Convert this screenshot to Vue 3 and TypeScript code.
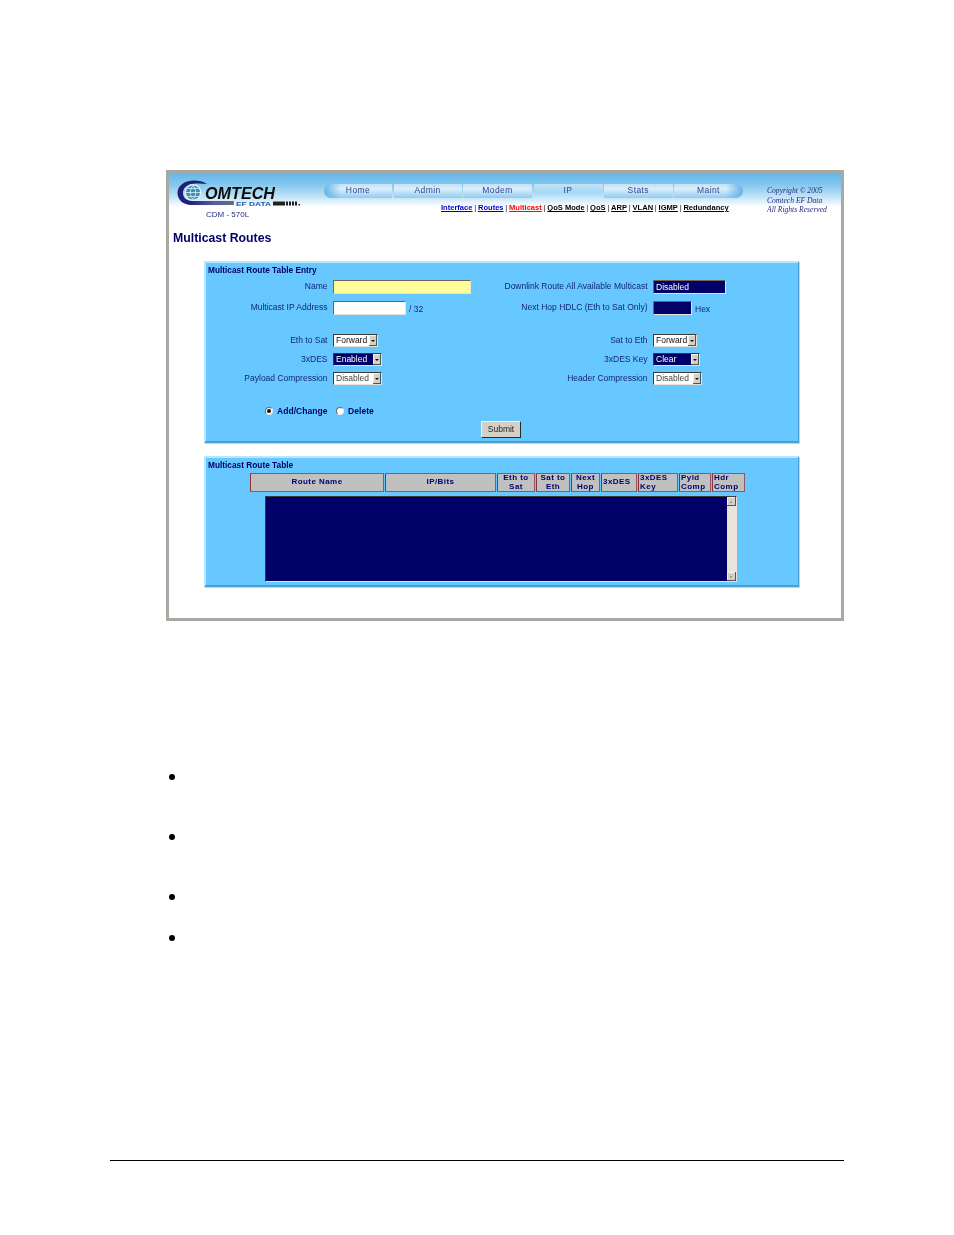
<script setup lang="ts">
const tabs = ['Home', 'Admin', 'Modem', 'IP', 'Stats', 'Maint']
const links = [
  { t: 'Interface', c: 'blue' },
  { t: 'Routes', c: 'blue' },
  { t: 'Multicast', c: 'red' },
  { t: 'QoS Mode', c: 'black' },
  { t: 'QoS', c: 'black' },
  { t: 'ARP', c: 'black' },
  { t: 'VLAN', c: 'black' },
  { t: 'IGMP', c: 'black' },
  { t: 'Redundancy', c: 'black' },
]
const heads = [
  { t: 'Route Name', a: 'c' },
  { t: 'IP/Bits', a: 'c' },
  { t: 'Eth to Sat', a: 'c' },
  { t: 'Sat to Eth', a: 'c' },
  { t: 'Next Hop', a: 'c' },
  { t: '3xDES', a: 'l' },
  { t: '3xDES Key', a: 'l' },
  { t: 'Pyld Comp', a: 'l' },
  { t: 'Hdr Comp', a: 'l' },
]
const bullets = ['tall', 'tall', 'short', 'last']
</script>

<template>
  <div class="page">
    <div class="frame">
      <header class="head">
        <div class="brand">
          <svg class="logo" width="126" height="30" viewBox="0 0 126 30">
            <defs>
              <linearGradient id="band" x1="0" x2="1" y1="0" y2="0">
                <stop offset="0" stop-color="#26267c" />
                <stop offset="0.55" stop-color="#5a5aa0" />
                <stop offset="1" stop-color="#6a6a78" />
              </linearGradient>
            </defs>
            <path d="M31 6C27 3 23 2.500 18 2.500 8 2.500 1.500 8 1.500 15c0 7 6 12 14 12l42 0 0-4-40 0C11 23 7 20 7 15 7 10 11 6.500 17 5.800c5-.5 9-.3 14 .2z" fill="#1f1f78" />
            <rect x="15" y="23" width="42.500" height="4" fill="url(#band)" />
            <circle cx="17" cy="14.500" r="8.500" fill="#d8eef8" />
            <circle cx="17" cy="14.500" r="7" fill="#3d8fb4" />
            <path d="M10 14.500h14M17 7.500c-3.500 4-3.500 10 0 14M17 7.500c3.500 4 3.500 10 0 14M11.500 10.500h11M11.500 18.500h11" stroke="#e4f3f9" stroke-width="0.800" fill="none" />
            <text x="29" y="20.500" class="omtech" textLength="70" lengthAdjust="spacingAndGlyphs">OMTECH</text>
            <text x="60" y="27.500" class="efdata" textLength="35" lengthAdjust="spacingAndGlyphs">EF DATA</text>
            <path d="M97 23.500h12v4H97zM110 23.500h2v4h-2zM113 23.500h2v4h-2zM116 23.500h2v4h-2zM119 23.500h2v4h-2z" fill="#222" />
            <rect x="122.500" y="26" width="1.500" height="1.500" fill="#222" />
          </svg>
          <div class="model">CDM - 570L</div>
        </div>
        <nav class="nav">
          <div class="tabs">
            <div
              v-for="(t, i) in tabs"
              :key="t"
              class="tab"
              :class="{ first: i === 0, last: i === 5, active: t === 'IP' }"
            >{{ t }}</div>
          </div>
          <div class="links">
            <template v-for="(l, i) in links" :key="l.t">
              <a class="link" :class="l.c">{{ l.t }}</a><span v-if="i < links.length - 1" class="sep">|</span>
            </template>
          </div>
        </nav>
        <div class="copy">
          <div>Copyright © 2005</div>
          <div>Comtech EF Data</div>
          <div>All Rights Reserved</div>
        </div>
      </header>

      <h1 class="title">Multicast Routes</h1>

      <section class="panel entry">
        <div class="ptitle">Multicast Route Table Entry</div>
        <div class="form">
          <label class="lab">Name</label>
          <div class="ctl"><input class="field name" /></div>
          <label class="lab">Downlink Route All Available Multicast</label>
          <div class="ctl"><div class="field dark dl">Disabled</div></div>

          <label class="lab">Multicast IP Address</label>
          <div class="ctl"><input class="field ip" /><span class="suffix">/ 32</span></div>
          <label class="lab">Next Hop HDLC (Eth to Sat Only)</label>
          <div class="ctl"><div class="field dark hop"></div><span class="suffix">Hex</span></div>

          <div class="spacer"></div>

          <label class="lab">Eth to Sat</label>
          <div class="ctl"><div class="sel w45"><span class="val">Forward</span><i class="arrow"></i></div></div>
          <label class="lab">Sat to Eth</label>
          <div class="ctl"><div class="sel w44"><span class="val">Forward</span><i class="arrow"></i></div></div>

          <label class="lab">3xDES</label>
          <div class="ctl"><div class="sel w49 navy"><span class="val">Enabled</span><i class="arrow"></i></div></div>
          <label class="lab">3xDES Key</label>
          <div class="ctl"><div class="sel w47 navy"><span class="val">Clear</span><i class="arrow"></i></div></div>

          <label class="lab">Payload Compression</label>
          <div class="ctl"><div class="sel w49 off"><span class="val">Disabled</span><i class="arrow"></i></div></div>
          <label class="lab">Header Compression</label>
          <div class="ctl"><div class="sel w49 off"><span class="val">Disabled</span><i class="arrow"></i></div></div>
        </div>
        <div class="radios">
          <span class="radio on"></span><span class="rlab">Add/Change</span>
          <span class="radio second"></span><span class="rlab">Delete</span>
        </div>
        <div class="submit-row"><button class="submit" type="button">Submit</button></div>
      </section>

      <section class="panel table">
        <div class="ptitle">Multicast Route Table</div>
        <div class="thead">
          <div v-for="h in heads" :key="h.t" class="th" :class="h.a">{{ h.t }}</div>
        </div>
        <div class="listbox">
          <div class="scroll">
            <span class="sb up"></span>
            <span class="sb down"></span>
          </div>
        </div>
      </section>
    </div>

    <ul class="bullets">
      <li v-for="(b, i) in bullets" :key="i" class="bullet" :class="b"></li>
    </ul>

    <div class="rule"></div>
  </div>
</template>

<style scoped>
.page {
  box-sizing: border-box;
  width: 954px;
  height: 1235px;
  padding: 170px 0 0 166px;
  background: #fff;
  overflow: hidden;
  position: relative;
  font-family: "Liberation Sans", Arial, sans-serif;
}
.frame {
  box-sizing: border-box;
  width: 678px;
  height: 451px;
  border: 3px solid #a9a9a3;
  background: #fff;
  filter: blur(0.4px);
  color: #000066;
}
.head {
  display: flex;
  height: 52px;
  background: linear-gradient(#63b6ea 0, #86c8ef 12px, #c8e6f8 25px, #fff 34px);
}
.brand { width: 155px; padding: 5px 0 0 7px; box-sizing: border-box; }
.logo { display: block; }
.omtech { font: italic bold 17px "Liberation Sans", sans-serif; fill: #0c0c0c; }
.efdata { font: bold 5.500px "Liberation Sans", sans-serif; fill: #1c5fa6; }
.model {
  margin: 2px 0 0 30px;
  font-size: 8px;
  line-height: 10px;
  color: #1f2f78;
}
.nav { width: 419px; padding-top: 11px; box-sizing: border-box; }
.tabs {
  display: grid;
  grid-template-columns: 68px 68px 69px 69px 68.500px 69px;
  column-gap: 1.500px;
  height: 14px;
}
.tab {
  background: linear-gradient(#c0e2f7 0, #dceffb 35%, #8fcbf0 100%);
  color: #33468e;
  font-size: 8.500px;
  line-height: 13px;
  text-align: center;
  letter-spacing: 0.4px;
}
.tab.first { border-radius: 7px 0 0 7px; background: linear-gradient(90deg, #63b4e8 0, rgba(99, 180, 232, 0) 25%), linear-gradient(#c0e2f7 0, #dceffb 35%, #8fcbf0 100%); }
.tab.last { border-radius: 0 7px 7px 0; background: linear-gradient(270deg, #63b4e8 0, rgba(99, 180, 232, 0) 25%), linear-gradient(#c0e2f7 0, #dceffb 35%, #8fcbf0 100%); }
.tab.active { background: linear-gradient(#bfe3f8 0, #a6d8f5 65%, #cfe9f9 100%); }
.links {
  margin: 5px 0 0 117px;
  white-space: nowrap;
  font-size: 7.550px;
  line-height: 10px;
  font-weight: bold;
  color: #111;
}
.link { text-decoration: underline; }
.link.blue { color: #0000cc; }
.link.red { color: #ff0000; }
.link.black { color: #000; }
.sep { display: inline-block; width: 5.500px; text-align: center; font-weight: normal; color: #111; }
.copy {
  margin: 13px 0 0 24px;
  font: italic 7.600px/9.500px "Liberation Serif", serif;
  color: #2a2a80;
  white-space: nowrap;
}
.title {
  margin: 6px 0 16px 4px;
  font-size: 12.300px;
  line-height: 14px;
  font-weight: bold;
  color: #000066;
}
.panel {
  box-sizing: border-box;
  width: 595px;
  margin-left: 35px;
  background: #66c8ff;
  border: 2px solid;
  border-color: #b4e8ff #4c9fd0 #4c9fd0 #b4e8ff;
  border-right-width: 1px;
  box-shadow: 1px 1px 0 #a6e0ff;
}
.entry { height: 182px; }
.table { height: 131px; margin-top: 13px; }
.ptitle {
  font-size: 8.300px;
  font-weight: bold;
  line-height: 13px;
  padding: 1px 0 0 2px;
  margin-bottom: -1px;
  color: #000066;
}
.form {
  display: grid;
  grid-template-columns: 122px 172px 148px 149px;
  grid-template-rows: 21px 21px 13px 19px 19px 19px;
  align-items: center;
}
.spacer { grid-column: 1 / -1; }
.lab {
  font-size: 8.500px;
  line-height: 10px;
  text-align: right;
  white-space: nowrap;
  color: #15257a;
  justify-self: end;
  padding-right: 0.500px;
  margin-bottom: 1px;
}
.ctl {
  display: flex;
  align-items: center;
  margin-left: 5px;
}
.field {
  box-sizing: border-box;
  height: 14px;
  margin: 0;
  padding: 0 0 0 2px;
  border: 1px solid;
  border-color: #6e6458 #e6e2da #e6e2da #6e6458;
  font-size: 8.500px;
  line-height: 12px;
  background: #fff;
  outline: none;
}
.name { width: 138px; background: #ffff99; }
.ip { width: 73px; }
.dark { background: #000066; color: #fff; }
.dl { width: 73px; }
.hop { width: 39px; }
.suffix { font-size: 8.500px; margin: 3px 0 0 3px; color: #15257a; }
.sel {
  box-sizing: border-box;
  height: 13px;
  display: flex;
  align-items: center;
  justify-content: space-between;
  padding: 0 0 0 2px;
  border: 1px solid;
  border-color: #3a3a3a #e6e2da #e6e2da #3a3a3a;
  background: #fff;
  font-size: 8.500px;
  color: #111;
  line-height: 11px;
}
.w45 { width: 45px; }
.w44 { width: 44px; }
.w49 { width: 49px; }
.w47 { width: 47px; }
.sel.navy { background: #000066; color: #fff; }
.sel.off { color: #444; }
.arrow {
  position: relative;
  flex: none;
  width: 8px;
  height: 11px;
  background: #d4d0c8;
  box-shadow: inset -1px -1px 0 #55524a, inset 1px 1px 0 #f4f2ee;
}
.arrow::after {
  content: "";
  position: absolute;
  left: 2px;
  top: 4.500px;
  border-style: solid;
  border-width: 2.500px 2px 0 2px;
  border-color: #111 transparent transparent transparent;
}
.radios {
  display: flex;
  align-items: center;
  height: 16px;
  margin-top: 15px;
  padding-left: 59px;
  font-size: 8.500px;
  font-weight: bold;
  letter-spacing: 0.05px;
  color: #000066;
}
.radio {
  position: relative;
  box-sizing: border-box;
  width: 8px;
  height: 8px;
  border-radius: 50%;
  background: #fff;
  border: 1px solid;
  border-color: #6e6a62 #e8e4dc #e8e4dc #6e6a62;
  margin-right: 4px;
}
.radio.on::after {
  content: "";
  position: absolute;
  left: 1px;
  top: 1px;
  width: 4px;
  height: 4px;
  border-radius: 50%;
  background: #111;
}
.radio.second { margin-left: 8.500px; }
.submit-row { display: flex; justify-content: center; margin-top: 2px; padding-right: 2px; }
.submit {
  box-sizing: border-box;
  width: 40px;
  height: 17px;
  padding: 0;
  background: #d4d0c8;
  border: 1px solid;
  border-color: #f4f2ee #2a2a2a #2a2a2a #f4f2ee;
  font: 8.500px/13px "Liberation Sans", sans-serif;
  color: #222;
}
.thead {
  display: grid;
  grid-template-columns: 134px 111px 38px 34px 29px 36px 40px 32px 33px;
  column-gap: 1px;
  margin: 2px 0 0 44px;
  width: 495px;
  height: 19px;
}
.th {
  box-sizing: border-box;
  display: flex;
  align-items: center;
  background: #c0c0c0;
  border: 1px solid #8b5a68;
  border-left-color: #8f3038;
  font-weight: bold;
  font-size: 8px;
  line-height: 8.500px;
  letter-spacing: 0.45px;
  color: #000066;
}
.th.c { justify-content: center; text-align: center; }
.th.l { padding-left: 1px; text-align: left; }
.listbox {
  box-sizing: border-box;
  position: relative;
  width: 472px;
  height: 86px;
  margin: 4px 0 0 59px;
  background: #000066;
  border: 1px solid;
  border-color: #3a3a3a #e8e4dc #e8e4dc #3a3a3a;
}
.scroll {
  position: absolute;
  top: 0;
  right: 0;
  bottom: 0;
  width: 9px;
  background: #e8e4dc;
  display: flex;
  flex-direction: column;
  justify-content: space-between;
}
.sb {
  position: relative;
  display: block;
  height: 9px;
  background: #d4d0c8;
  box-shadow: inset -1px -1px 0 #55524a, inset 1px 1px 0 #f4f2ee;
}
.sb::after {
  content: "";
  position: absolute;
  left: 2.500px;
  top: 3.500px;
  border-style: solid;
  border-color: transparent;
}
.sb.up::after { border-width: 0 1.500px 2px 1.500px; border-bottom-color: #777; }
.sb.down::after { border-width: 2px 1.500px 0 1.500px; border-top-color: #777; }
.bullets {
  list-style: none;
  margin: 153px 0 0 3px;
  padding: 0;
}
.bullet { position: relative; }
.bullet.tall { height: 60px; }
.bullet.short { height: 41px; }
.bullet.last { height: 6px; }
.bullet::before {
  content: "";
  display: block;
  width: 6px;
  height: 6px;
  border-radius: 50%;
  background: #000;
}
.rule {
  position: absolute;
  left: 110px;
  top: 1160px;
  width: 734px;
  height: 1px;
  background: #000;
}
</style>
